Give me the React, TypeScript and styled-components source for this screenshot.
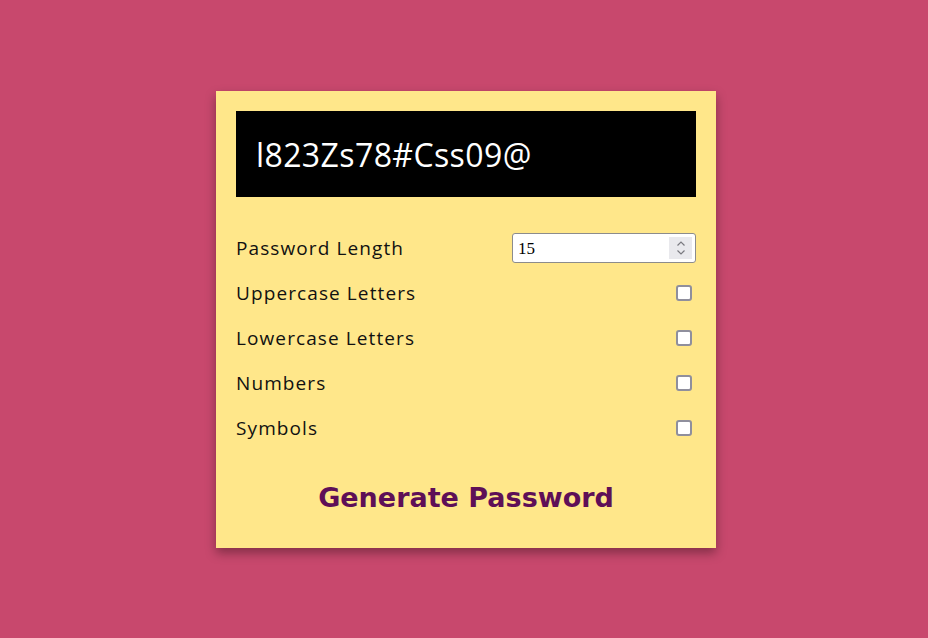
import React, { useState } from 'react'
import styled, { createGlobalStyle } from 'styled-components'

const GlobalStyle = createGlobalStyle`
  html, body {
    margin: 0;
    padding: 0;
    background: #c8486d;
    height: 100%;
  }
`

const options = [
  'Uppercase Letters',
  'Lowercase Letters',
  'Numbers',
  'Symbols',
]

const App = () => {
  const [length, setLength] = useState('15')

  return (
    <>
      <GlobalStyle />
      <Page>
        <Card>
          <Display>l823Zs78#Css09@</Display>
          <Settings>
            <Row>
              <Label>Password Length</Label>
              <NumberWrap>
                <NumberInput
                  type="text"
                  value={length}
                  onChange={(e) => setLength(e.target.value)}
                />
                <Spinner>
                  <svg width="10" height="16" viewBox="0 0 10 16">
                    <path d="M1.5 5.5 L5 2 L8.5 5.5" fill="none" stroke="#7a7a80" strokeWidth="1.2" />
                    <path d="M1.5 10.5 L5 14 L8.5 10.5" fill="none" stroke="#7a7a80" strokeWidth="1.2" />
                  </svg>
                </Spinner>
              </NumberWrap>
            </Row>
            {options.map((option) => (
              <Row key={option}>
                <Label>{option}</Label>
                <Check type="checkbox" />
              </Row>
            ))}
          </Settings>
          <GenerateButton>Generate Password</GenerateButton>
        </Card>
      </Page>
    </>
  )
}

export default App

const Page = styled.div`
  min-height: 638px;
  display: flex;
  justify-content: center;
  padding: 91px 0 0 4px;
  box-sizing: border-box;
`

const Card = styled.div`
  width: 500px;
  height: 457px;
  box-sizing: border-box;
  padding: 20px;
  background: #ffe78a;
  box-shadow: 0 5px 10px rgba(0, 0, 0, 0.35);
  display: flex;
  flex-direction: column;
`

const Display = styled.div`
  height: 86px;
  background: #000;
  color: #fff;
  font-family: 'Open Sans', sans-serif;
  font-size: 32px;
  display: flex;
  align-items: center;
  padding-left: 20px;
  box-sizing: border-box;
  letter-spacing: 0.4px;
`

const Settings = styled.div`
  margin-top: 28px;
  display: flex;
  flex-direction: column;
`

const Row = styled.div`
  height: 45px;
  display: flex;
  align-items: center;
  justify-content: space-between;
`

const Label = styled.span`
  font-family: 'Open Sans', sans-serif;
  font-size: 19px;
  color: #111;
  letter-spacing: 1.1px;
`

const NumberWrap = styled.div`
  position: relative;
  width: 184px;
  height: 30px;
`

const NumberInput = styled.input`
  width: 100%;
  height: 100%;
  box-sizing: border-box;
  border: 1px solid #8c8c8c;
  border-radius: 3px;
  background: #fff;
  font-family: 'Liberation Serif', serif;
  font-size: 17px;
  padding: 2px 0 0 5px;
  outline: none;
`

const Spinner = styled.div`
  position: absolute;
  top: 4px;
  right: 4px;
  width: 23px;
  height: 22px;
  background: #e9e9ed;
  display: flex;
  align-items: center;
  justify-content: center;
`

const Check = styled.input`
  appearance: none;
  width: 16px;
  height: 16px;
  margin: 0 4px 0 0;
  box-sizing: border-box;
  border: 2px solid #8f8f9d;
  border-radius: 3px;
  background: #fff;
  cursor: pointer;

  &:checked {
    background: #5e0f57;
  }
`

const GenerateButton = styled.button`
  margin-top: auto;
  height: 62px;
  border: none;
  background: transparent;
  color: #5e0f57;
  font-family: 'DejaVu Sans', sans-serif;
  font-weight: bold;
  font-size: 27px;
  cursor: pointer;
`
